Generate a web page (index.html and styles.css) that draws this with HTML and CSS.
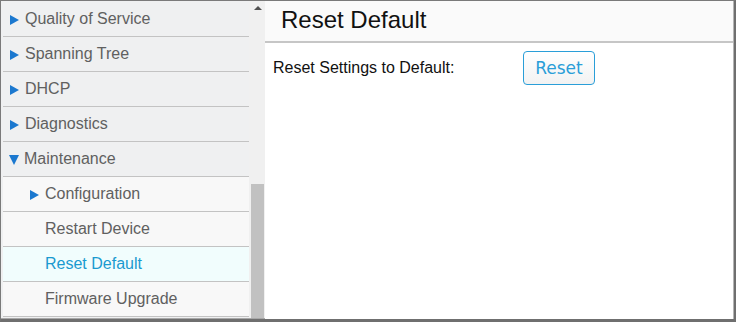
FILE: index.html
```html
<!DOCTYPE html>
<html lang="en">
<head>
  <meta charset="UTF-8">
  <title>Reset Default</title>
  <link rel="stylesheet" href="styles.css">
</head>
<body>
<div class="frame">
  <div class="sidebar">
    <ul class="menu">
      <li class="item"><span class="arrow"></span>Quality of Service</li>
      <li class="item"><span class="arrow"></span>Spanning Tree</li>
      <li class="item"><span class="arrow"></span>DHCP</li>
      <li class="item"><span class="arrow"></span>Diagnostics</li>
      <li class="item"><span class="arrow open"></span>Maintenance</li>
      <li class="item sub"><span class="arrow"></span>Configuration</li>
      <li class="item sub">Restart Device</li>
      <li class="item sub active">Reset Default</li>
      <li class="item sub">Firmware Upgrade</li>
    </ul>
    <div class="scrollbar">
      <span class="scroll-up"></span>
      <div class="thumb"></div>
    </div>
  </div>
  <div class="main">
    <div class="header">Reset Default</div>
    <div class="content">
      <label class="label">Reset Settings to Default:</label>
      <button class="btn">Reset</button>
    </div>
  </div>
</div>
</body>
</html>
```

FILE: styles.css
```css
body {
    margin: 0;
    font-family: "Liberation Sans", Arial, sans-serif;
    background: #fff;
}

.frame {
    width: 736px;
    height: 322px;
    box-sizing: border-box;
    display: flex;
    border-top: 1px solid #7a7a7a;
    border-left: 1px solid #7a7a7a;
    border-right: 2px solid #6f6f6f;
    border-bottom: 3px solid #6f6f6f;
    overflow: hidden;
}

/* left menu */
.sidebar {
    width: 264px;
    display: flex;
    background: #f0f0f1;
    border-bottom: 1px solid #a8a8a8;
}

.menu {
    list-style: none;
    margin: 0;
    padding: 1px 0 0 2px;
    width: 246px;
    background: #eff0f1;
}

.item {
    height: 34px;
    line-height: 34px;
    border-bottom: 1px solid #c3c3c3;
    padding-left: 7px;
    font-size: 16px;
    color: #606060;
    display: flex;
    align-items: center;
}

.item.sub {
    background: #f8f8f8;
    padding-left: 42px;
}

.item.sub .arrow {
    margin-left: -15px;
}

.item.active {
    background: #f1fdfd;
    color: #1a9ad0;
}

.arrow {
    width: 0;
    height: 0;
    border-top: 5px solid transparent;
    border-bottom: 5px solid transparent;
    border-left: 9px solid #1b78cf;
    margin-right: 6px;
    margin-top: 1px;
}

.arrow.open {
    border-left: 5px solid transparent;
    border-right: 5px solid transparent;
    border-top: 10px solid #1b78cf;
    border-bottom: 0;
    margin-right: 5px;
    margin-left: -1px;
}

.scrollbar {
    flex: 1;
    position: relative;
    background: #f0f0f0;
}

.scroll-up {
    position: absolute;
    top: 5px;
    left: 5px;
    width: 0;
    height: 0;
    border-left: 4px solid transparent;
    border-right: 4px solid transparent;
    border-bottom: 4px solid #505050;
}

.thumb {
    position: absolute;
    left: 2px;
    width: 13px;
    top: 183px;
    bottom: 0;
    background: #c1c1c1;
}

/* right panel */
.main {
    flex: 1;
    display: flex;
    flex-direction: column;
    border-right: 1px solid #b4b4b4;
}

.header {
    height: 40px;
    line-height: 38px;
    padding-left: 16px;
    background: #fafafa;
    border-bottom: 2px solid #c6c6c6;
    font-size: 24px;
    color: #111;
}

.content {
    display: flex;
    align-items: center;
    padding: 8px 0 0 8px;
}

.label {
    width: 250px;
    font-size: 16px;
    color: #111;
}

.btn {
    width: 72px;
    height: 34px;
    border: 1px solid #2a9ed8;
    border-radius: 4px;
    background: linear-gradient(#ffffff, #f2f2f2);
    color: #2a9ed8;
    font-family: "DejaVu Sans", Verdana, sans-serif;
    font-size: 17px;
    padding: 0;
}
```
